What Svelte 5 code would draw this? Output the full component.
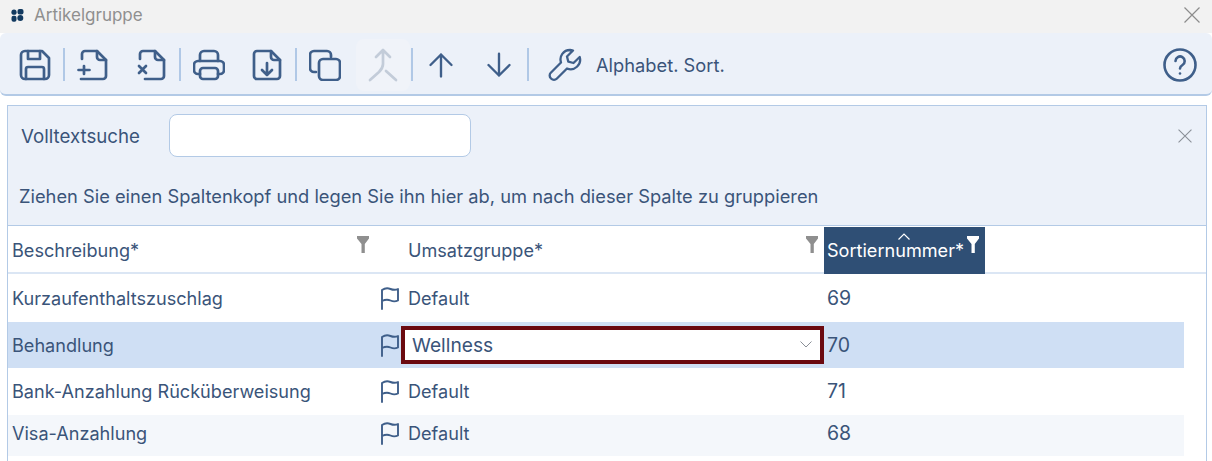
<script>
  const rows = [
    { name: 'Kurzaufenthaltszuschlag', group: 'Default', sort: 69 },
    { name: 'Behandlung', group: 'Wellness', sort: 70, active: true },
    { name: 'Bank-Anzahlung Rücküberweisung', group: 'Default', sort: 71 },
    { name: 'Visa-Anzahlung', group: 'Default', sort: 68, alt: true }
  ];
</script>

{#snippet funnel()}
  <svg class="funnel" viewBox="0 0 12 17"><path d="M0 0h12v2.500L7.800 8V17H4.500V8L0 2.500z" /></svg>
{/snippet}

<div class="window">
  <header class="title">
    <svg class="logo" viewBox="0 0 13 13">
      <circle cx="3" cy="3.200" r="2.600" /><rect x="6.500" y="0" width="6" height="5.400" rx="2" />
      <rect x="0.500" y="6.800" width="5" height="6" rx="2" /><circle cx="9.300" cy="9" r="3" />
    </svg>
    <span class="title-text">Artikelgruppe</span>
    <svg class="close" viewBox="0 0 16 16"><path d="M.5.5l15 15M15.500.5l-15 15" /></svg>
  </header>

  <div class="toolbar">
    <button class="tool">
      <svg viewBox="0 0 32 32"><path d="M6 2h17l7 7v17a4 4 0 0 1-4 4H6a4 4 0 0 1-4-4V6a4 4 0 0 1 4-4z" /><path d="M9 2v8h12V2M7 30V20a2 2 0 0 1 2-2h14a2 2 0 0 1 2 2v10" /></svg>
    </button>
    <i class="sep"></i>
    <button class="tool">
      <svg viewBox="0 0 32 32"><path d="M5 10V5a3 3 0 0 1 3-3h12l9 9v16a3 3 0 0 1-3 3H4" /><path d="M20 2v6a3 3 0 0 0 3 3h6M7 17v8M1.500 21h11" /></svg>
    </button>
    <button class="tool">
      <svg viewBox="0 0 32 32"><path d="M5 10V5a3 3 0 0 1 3-3h12l9 9v16a3 3 0 0 1-3 3H10" /><path d="M20 2v6a3 3 0 0 0 3 3h6M4 17l7 7M11 17l-7 7" /></svg>
    </button>
    <i class="sep"></i>
    <button class="tool">
      <svg viewBox="0 0 32 32"><path d="M7 12V6a4 4 0 0 1 4-4h10a4 4 0 0 1 4 4v6" /><path d="M7 25H5a4 4 0 0 1-4-4v-5a4 4 0 0 1 4-4h22a4 4 0 0 1 4 4v5a4 4 0 0 1-4 4h-2" /><rect x="7" y="19" width="18" height="11" rx="3" /></svg>
    </button>
    <button class="tool">
      <svg viewBox="0 0 32 32"><path d="M6 2h14l9 9v16a3 3 0 0 1-3 3H6a3 3 0 0 1-3-3V5a3 3 0 0 1 3-3z" /><path d="M20 2v6a3 3 0 0 0 3 3h6M16 14v12M11 21l5 5 5-5" /></svg>
    </button>
    <i class="sep"></i>
    <button class="tool">
      <svg viewBox="0 0 32 32"><path d="M7 23H5a4 4 0 0 1-4-4V6a4 4 0 0 1 4-4h13a4 4 0 0 1 4 4v2" /><rect x="10" y="10" width="21" height="21" rx="4" /></svg>
    </button>
    <button class="tool disabled">
      <svg viewBox="0 0 32 34"><path d="M9 9l7-7 7 7M16 2v14c0 3-2 6-4 8L3 32M19 23l10 9" /></svg>
    </button>
    <i class="sep"></i>
    <button class="tool arrow">
      <svg viewBox="0 0 32 32"><path d="M16 29V4M4 16L16 4l12 12" /></svg>
    </button>
    <button class="tool arrow">
      <svg viewBox="0 0 32 32"><path d="M16 3v25M4 16l12 12 12-12" /></svg>
    </button>
    <i class="sep"></i>
    <button class="tool wrench">
      <svg viewBox="0 0 34 34"><path d="M22 2a9.500 9.500 0 0 0-9 12.500L2.800 24.800a3.800 3.800 0 0 0 0 5.400l.5.500a3.800 3.800 0 0 0 5.400 0L19 20.500a9.500 9.500 0 0 0 12.700-11.500l-6.200 6-5.200-1.300-1.300-5.200 6-6A9.500 9.500 0 0 0 22 2z" /></svg>
    </button>
    <span class="alpha">Alphabet. Sort.</span>
    <svg class="help" viewBox="0 0 34 34"><circle cx="17" cy="17" r="15.500" /><path d="M12.500 13a4.600 4.600 0 1 1 7 4c-1.700 1-2.500 2-2.500 3.500" /><circle class="dot" cx="17" cy="25.500" r="1.300" /></svg>
  </div>

  <div class="body">
    <section class="panel">
      <div class="search">
        <label for="q">Volltextsuche</label>
        <input id="q" />
        <svg class="panel-close" viewBox="0 0 13 13"><path d="M.5.500l12 12M12.500.500l-12 12" /></svg>
      </div>
      <p class="hint">Ziehen Sie einen Spaltenkopf und legen Sie ihn hier ab, um nach dieser Spalte zu gruppieren</p>
    </section>

    <div class="row head">
      <div class="c1"><span>Beschreibung*</span>{@render funnel()}</div>
      <div class="c2"><span>Umsatzgruppe*</span>{@render funnel()}</div>
      <div class="c3 sorted">
        <svg class="caret" viewBox="0 0 12 7"><path d="M.5 6.500L6 1l5.500 5.500" /></svg>
        <span>Sortiernummer*</span>{@render funnel()}
      </div>
    </div>
    {#each rows as r, i}
      <div class="row" class:first={i === 0} class:third={i === 2} class:active={r.active} class:alt={r.alt}>
        <div class="c1">
          <span>{r.name}</span>
          <svg class="flag" viewBox="0 0 20 24"><path d="M2 23V4c3-2 6-2 8.500-1s5 1.200 7.500 0v11.500c-2.500 1.200-5 1.200-7.500 0S5 13.500 2 15" /></svg>
        </div>
        <div class="c2">
          {#if r.active}
            <div class="select">
              <span>{r.group}</span>
              <svg viewBox="0 0 12 7"><path d="M.5.500L6 6l5.500-5.500" /></svg>
            </div>
          {:else}
            <span>{r.group}</span>
          {/if}
        </div>
        <div class="c3"><span>{r.sort}</span></div>
      </div>
    {/each}
  </div>
</div>

<style>
  :global(body) {
    margin: 0;
    background: #fff;
  }
  .window {
    width: 1212px;
    height: 461px;
    overflow: hidden;
    font-family: "Inter", "Liberation Sans", sans-serif;
    font-size: 18.100px;
    color: #3a5479;
    display: flex;
    flex-direction: column;
  }
  .title {
    height: 33px;
    background: #f2f2f2;
    display: flex;
    align-items: center;
    padding: 0 12px 3px 11px;
    flex: none;
    box-sizing: border-box;
  }
  .logo {
    width: 13px;
    height: 13px;
    fill: #123a60;
  }
  .title-text {
    margin-left: 10px;
    font-size: 17px;
    color: #8f8f8f;
  }
  .close {
    width: 16px;
    height: 16px;
    margin-left: auto;
    fill: none;
    stroke: #8c8c8c;
    stroke-width: 1.200;
  }
  .toolbar {
    height: 63px;
    flex: none;
    box-sizing: border-box;
    background: #ecf1f9;
    border-bottom: 2px solid #b3cae6;
    border-radius: 6px;
    display: flex;
    align-items: center;
    padding: 2px 15px 0 6px;
  }
  .tool {
    width: 58px;
    height: 52px;
    flex: none;
    padding: 0;
    border: 0;
    background: none;
    display: flex;
    align-items: center;
    justify-content: center;
    border-radius: 8px;
  }
  .tool svg {
    width: 32px;
    height: 32px;
    fill: none;
    stroke: #3f5f8a;
    stroke-width: 2.700;
    stroke-linecap: round;
    stroke-linejoin: round;
  }
  .disabled {
    background: #f0f3f9;
    width: 54px;
    margin: 0 2px;
  }
  .disabled svg {
    stroke: #c3ccd9;
    width: 32px;
    height: 34px;
  }
  .sep {
    width: 2px;
    margin: 0 -1px;
    height: 33px;
    background: #b0c8e6;
    flex: none;
  }
  .arrow svg {
    width: 28px;
    height: 28px;
  }
  .wrench {
    margin-left: 8px;
  }
  .wrench svg {
    width: 34px;
    height: 34px;
    stroke-width: 2.300;
  }
  .alpha {
    margin-left: 2px;
    font-size: 18.300px;
  }
  .help {
    width: 34px;
    height: 34px;
    margin-left: auto;
    fill: none;
    stroke: #3f5f8a;
    stroke-width: 2.600;
    stroke-linecap: round;
  }
  .help .dot {
    fill: #3f5f8a;
    stroke: none;
  }
  .body {
    flex: 1;
    width: 1200px;
    box-sizing: border-box;
    margin: 9px 0 0 7px;
    border: 1px solid #b3cae6;
    border-bottom: 0;
  }
  .panel {
    height: 120px;
    box-sizing: border-box;
    background: #ecf1f9;
    border-bottom: 1px solid #b3cae6;
  }
  .search {
    display: flex;
    align-items: center;
    height: 59px;
    padding: 0 14px 0 13px;
  }
  .search label {
    font-size: 18.700px;
    width: 148px;
    flex: none;
    padding-top: 2px;
  }
  .search input {
    width: 302px;
    height: 43px;
    box-sizing: border-box;
    border: 1px solid #b3cae6;
    border-radius: 8px;
    background: #fff;
    outline: none;
    padding: 0;
  }
  .panel-close {
    width: 14px;
    height: 14px;
    margin-left: auto;
    margin-top: 1px;
    fill: none;
    stroke: #8a8f97;
    stroke-width: 1;
  }
  .hint {
    margin: 20px 0 0 11px;
    line-height: 22px;
    font-size: 18.300px;
    white-space: nowrap;
  }
  .row {
    display: flex;
    height: 47px;
    width: 1176px;
    box-sizing: border-box;
  }
  .first {
    height: 48px;
  }
  .third {
    padding-bottom: 2px;
  }
  .head {
    width: 100%;
    height: 48px;
    box-shadow: inset 0 -2px 0 #dbe6f4;
  }
  .active {
    background: #cfdff4;
    height: 46px;
  }
  .alt {
    background: #f4f7fb;
    height: 41px;
    padding-bottom: 5px;
  }
  .c1, .c2, .c3 {
    display: flex;
    align-items: center;
    box-sizing: border-box;
    white-space: nowrap;
  }
  .c1 {
    width: 394px;
    padding: 0 2px 0 4px;
    justify-content: space-between;
  }
  .head .c1 {
    padding-right: 33px;
  }
  .c2 {
    width: 422px;
    padding: 0 6px;
    justify-content: space-between;
  }
  .c3 {
    padding-left: 3px;
    font-size: 19.500px;
  }
  .funnel {
    width: 12px;
    height: 17px;
    flex: none;
    fill: #8f8f8f;
    align-self: flex-start;
    margin-top: 10px;
  }
  .sorted {
    width: 161px;
    height: 47px;
    align-self: flex-end;
    background: #2f4f75;
    color: #fff;
    position: relative;
    font-size: 18.100px;
    padding-bottom: 1px;
  }
  .sorted .funnel {
    fill: #fff;
    margin: 9px 0 0 3px;
  }
  .caret {
    position: absolute;
    left: 74px;
    top: 6px;
    width: 12px;
    height: 7px;
    fill: none;
    stroke: #fff;
    stroke-width: 1.200;
  }
  .flag {
    width: 20px;
    height: 24px;
    flex: none;
    fill: none;
    stroke: #3f5f8a;
    stroke-width: 1.900;
    stroke-linecap: round;
    stroke-linejoin: round;
  }
  .select {
    flex: 1;
    height: 38px;
    margin: 0 -6px 0 -7px;
    box-sizing: border-box;
    border: 4px solid #6b0a10;
    background: #fff;
    display: flex;
    align-items: center;
    justify-content: space-between;
    padding: 0 8px 1px 7px;
    font-size: 19.200px;
  }
  .select svg {
    width: 12px;
    height: 7px;
    fill: none;
    stroke: #8a8f97;
    stroke-width: 1;
  }
</style>
